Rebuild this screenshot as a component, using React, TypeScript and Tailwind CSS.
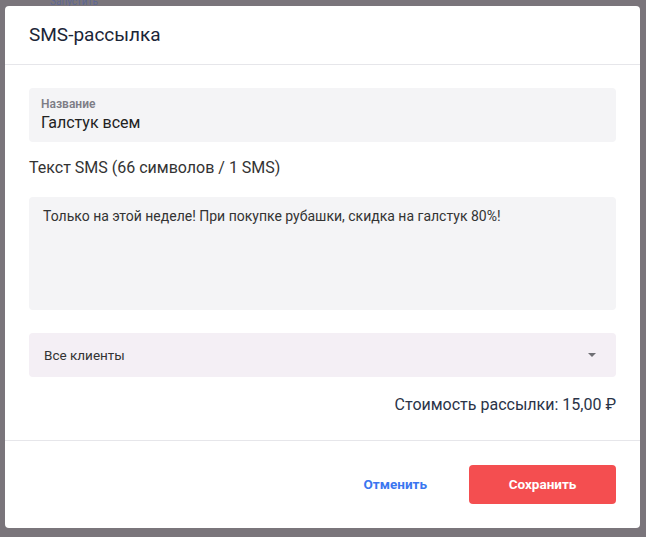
export default function App() {
  return (
    <div className="relative h-[537px] w-[646px] overflow-hidden bg-[#7a757b] font-['Roboto',sans-serif]">
      {/* страница под затемнением */}
      <div className="absolute left-[50px] top-[-6px] text-[10px] text-[#5d6794]">Запустить</div>

      <div className="relative ml-[5px] mt-[6px] flex h-[522px] w-[635px] flex-col rounded-[4px] bg-white">
        <div className="flex h-[59px] items-center border-b border-[#e6e6ea] px-6">
          <h1 className="text-[19px] font-normal text-[#1b2537]">SMS-рассылка</h1>
        </div>

        <div className="flex flex-col px-6 pt-[23px]">
          <div className="flex h-[54px] flex-col justify-center rounded-[4px] bg-[#f4f4f6] px-3">
            <span className="text-[12px] font-semibold leading-[14px] text-[#7d7d86]">Название</span>
            <span className="mt-[2px] text-[16px] leading-[20px] text-[#222]">Галстук всем</span>
          </div>

          <p className="mt-4 text-[16px] leading-[20px] text-[#333]">Текст SMS (66 символов / 1 SMS)</p>

          <div className="mt-[19px] h-[113px] rounded-[4px] bg-[#f4f4f6] px-[14px] pt-[10px]">
            <p className="text-[14px] leading-[18px] text-[#333]">
              Только на этой неделе! При покупке рубашки, скидка на галстук 80%!
            </p>
          </div>

          <div className="mt-[23px] flex h-[44px] items-center justify-between rounded-[4px] bg-[#f4eff5] pl-[15px] pr-[20px]">
            <span className="text-[13.5px] text-[#333]">Все клиенты</span>
            <svg width="8" height="4" viewBox="0 0 8 4">
              <path d="M0 0h8L4 4z" fill="#6f6f74" />
            </svg>
          </div>

          <p className="mt-[18px] text-right text-[16px] leading-[20px] text-[#2a3347]">
            Стоимость рассылки: 15,00 ₽
          </p>
        </div>

        <div className="mt-[25px] flex flex-1 items-center justify-end gap-[42px] border-t border-[#e6e6ea] px-6">
          <button className="text-[13.5px] font-bold text-[#3a76f0]">Отменить</button>
          <button className="h-[39px] w-[147px] rounded-[4px] bg-[#f44e50] text-[13.5px] font-bold text-white">
            Сохранить
          </button>
        </div>
      </div>
    </div>
  )
}
